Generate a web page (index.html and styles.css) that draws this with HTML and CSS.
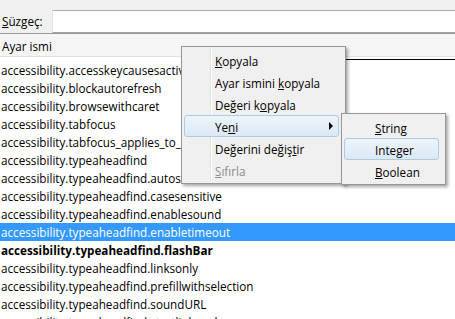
FILE: index.html
```html
<html>
<head>
    <meta charset="UTF-8">
    <title>about:config</title>
    <link rel="stylesheet" href="styles.css">
</head>
<body>
    <div class="filter">
        <label for="filter-box"><u>S</u>üzgeç:</label>
        <input type="text" id="filter-box">
    </div>
    <div class="tree">
        <div class="tree-head">Ayar ismi</div>
        <ul class="rows">
            <li>accessibility.accesskeycausesactivation</li>
            <li>accessibility.blockautorefresh</li>
            <li>accessibility.browsewithcaret</li>
            <li>accessibility.tabfocus</li>
            <li>accessibility.tabfocus_applies_to_xul</li>
            <li>accessibility.typeaheadfind</li>
            <li>accessibility.typeaheadfind.autostart</li>
            <li>accessibility.typeaheadfind.casesensitive</li>
            <li>accessibility.typeaheadfind.enablesound</li>
            <li class="selected">accessibility.typeaheadfind.enabletimeout</li>
            <li class="modified">accessibility.typeaheadfind.flashBar</li>
            <li>accessibility.typeaheadfind.linksonly</li>
            <li>accessibility.typeaheadfind.prefillwithselection</li>
            <li>accessibility.typeaheadfind.soundURL</li>
            <li>accessibility.typeaheadfind.startlinksonly</li>
        </ul>
        <div class="drop-line"></div>
    </div>

    <div class="menu main-menu">
        <div class="item"><u>K</u>opyala</div>
        <div class="item">Ayar ismini <u>k</u>opyala</div>
        <div class="item">Değeri k<u>o</u>pyala</div>
        <div class="item hot">Ye<u>n</u>i<span class="arrow"></span></div>
        <div class="item">Değerini değiş<u>t</u>ir</div>
        <div class="item disabled"><u>S</u>ıfırla</div>
    </div>
    <div class="menu sub-menu">
        <div class="item"><u>S</u>tring</div>
        <div class="item hot">Inte<u>g</u>er</div>
        <div class="item"><u>B</u>oolean</div>
    </div>
</body>
</html>
```

FILE: styles.css
```css
body {
    margin: 0;
    height: 319px;
    overflow: hidden;
    background: #f0f0f0;
    color: #000;
    font-family: "Open Sans", "Noto Sans", sans-serif;
    font-size: 11.7px;
}
.filter {
    display: flex;
    align-items: flex-end;
    height: 33px;
    padding-left: 2px;
}
.filter label {
    width: 50px;
    line-height: 24px;
}
.filter input {
    flex: 1;
    height: 23px;
    margin-right: -4px;
    border: 1px solid #abadb3;
    border-color: #abadb3 #dbdfe6 #a0a0a0 #e2e3ea;
    background: #fff;
    padding: 0 3px;
}
.tree {
    position: relative;
    background: #fff;
    border-top: 1px solid #9a9a9a;
    height: 285px;
}
.tree-head {
    height: 22px;
    line-height: 24px;
    padding-left: 2px;
    background: #f5f5f5;
    border-bottom: 1px solid #e3e3e3;
}
.rows {
    margin: 0;
    padding: 4px 0 0;
    list-style: none;
}
.rows li {
    height: 18px;
    line-height: 18px;
    padding-left: 1px;
    white-space: nowrap;
}
.rows .selected {
    background: #3399ff;
    color: #fff;
}
.rows .modified {
    font-weight: bold;
}
.drop-line {
    position: absolute;
    left: 181px;
    right: 0;
    top: 25px;
    height: 1px;
    background: #000;
}

.menu {
    position: absolute;
    box-sizing: border-box;
    background: #f0f0f0;
    border: 1px solid #979797;
    padding: 2px;
    box-shadow: 2px 2px 3px rgba(0, 0, 0, .35);
}
.main-menu {
    left: 181px;
    top: 46px;
    width: 165px;
}
.main-menu::before {
    content: "";
    position: absolute;
    left: 28px;
    top: 2px;
    bottom: 2px;
    width: 1px;
    background: #e2e3e3;
    border-right: 1px solid #fff;
}
.sub-menu {
    left: 341px;
    top: 113px;
    width: 105px;
}
.item {
    position: relative;
    height: 19px;
    padding-top: 1px;
    line-height: 20px;
    padding-left: 30px;
    margin-right: 4px;
    border: 1px solid transparent;
    border-radius: 3px;
    white-space: nowrap;
}
.item.hot {
    border-color: #aecbe4;
    background: linear-gradient(#edf4fb, #dce9f5);
}
.item.disabled {
    color: #8d8d8d;
}
.arrow {
    position: absolute;
    right: 5px;
    top: 6px;
    border-left: 4px solid #000;
    border-top: 4px solid transparent;
    border-bottom: 4px solid transparent;
}
```
